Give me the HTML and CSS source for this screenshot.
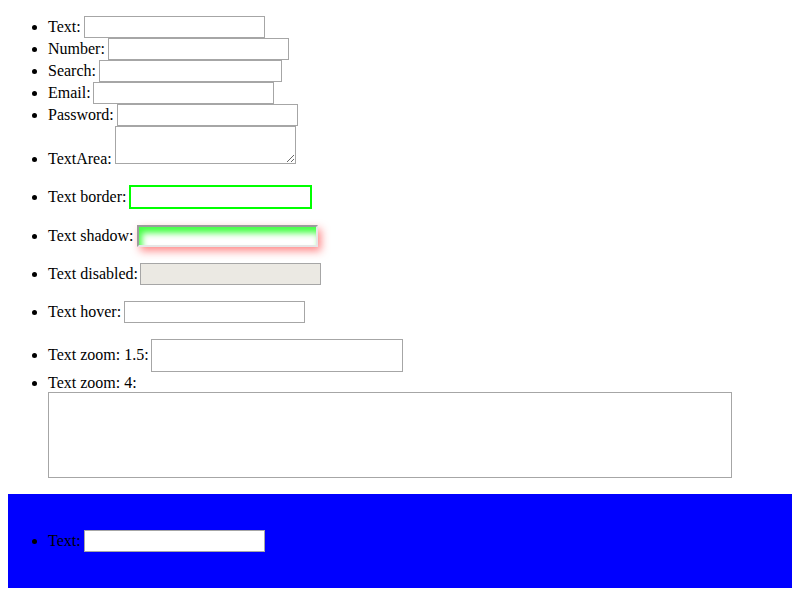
FILE: index.html
```html
<!DOCTYPE html>
<html>
<head>
<meta charset="utf-8">
<link rel="stylesheet" href="styles.css">
</head>
<body>
<ul class="first">
  <li>Text: <input type="text" class="field"></li>
  <li>Number: <input type="text" class="field"></li>
  <li>Search: <input type="text" class="field search"></li>
  <li>Email: <input type="text" class="field tight"></li>
  <li>Password: <input type="password" class="field"></li>
  <li>TextArea: <textarea class="area"></textarea></li>
</ul>
<ul>
  <li>Text border: <input type="text" class="field bordered"></li>
</ul>
<ul>
  <li>Text shadow: <input type="text" class="field shadowed"></li>
</ul>
<ul>
  <li>Text disabled: <input type="text" class="field tight" disabled></li>
</ul>
<ul>
  <li>Text hover: <input type="text" class="field"></li>
</ul>
<ul>
  <li>Text zoom: 1.5: <input type="text" class="field zoom15 tight"></li>
  <li class="zoom4-item">Text zoom: 4: <textarea class="zoom4"></textarea></li>
</ul>
<div class="blue">
  <ul>
    <li>Text: <input type="text" class="field"></li>
  </ul>
</div>
</body>
</html>
```

FILE: styles.css
```css
html, body {
  font-family: "Liberation Serif", "Times New Roman", serif;
  font-size: 16px;
  color: #000;
  background: #fff;
}
body {
  margin: 0 8px;
}
ul {
  margin: 16px 0;
  padding-left: 40px;
}
ul.first {
  margin-bottom: 17px;
}
.field {
  appearance: none;
  -webkit-appearance: none;
  box-sizing: border-box;
  width: 181px;
  height: 22px;
  margin: 0 0 0 -1px;
  padding: 1px 2px;
  border: 1px solid #a6a6a6;
  border-radius: 0;
  background: #fff;
  font: 13.333px "Liberation Sans", Arial, sans-serif;
  vertical-align: baseline;
}
.field.tight {
  margin-left: -2px;
}
.search {
  width: 183px;
}
.field:disabled {
  background: #ebe9e3;
  border-color: #a6a6a6;
}
.area {
  box-sizing: border-box;
  width: 181px;
  height: 38px;
  margin: 0 0 0 -1px;
  padding: 2px;
  border: 1px solid #a6a6a6;
  border-radius: 0;
  font: 13.333px "Liberation Mono", monospace;
}
.bordered {
  width: 183px;
  height: 24px;
  border: 2px solid #00ff00;
}
.shadowed {
  border-width: 2px;
  border-style: solid;
  border-color: #9b9b9b #e6e6e6 #e6e6e6 #9b9b9b;
  box-shadow: inset 3px 6px 6px #44ff44, 3px 4px 8px rgba(255, 40, 40, 0.55);
}
.zoom15 {
  width: 252px;
  height: 33px;
}
.zoom4-item {
  padding-top: 2px;
}
.zoom4 {
  display: block;
  box-sizing: border-box;
  width: 684px;
  height: 86px;
  margin: 0;
  padding: 2px;
  border: 1px solid #a6a6a6;
  border-radius: 0;
  resize: none;
  font: 13.333px "Liberation Mono", monospace;
}
.blue {
  background: #0000ff;
  padding: 20px 0;
}
```
